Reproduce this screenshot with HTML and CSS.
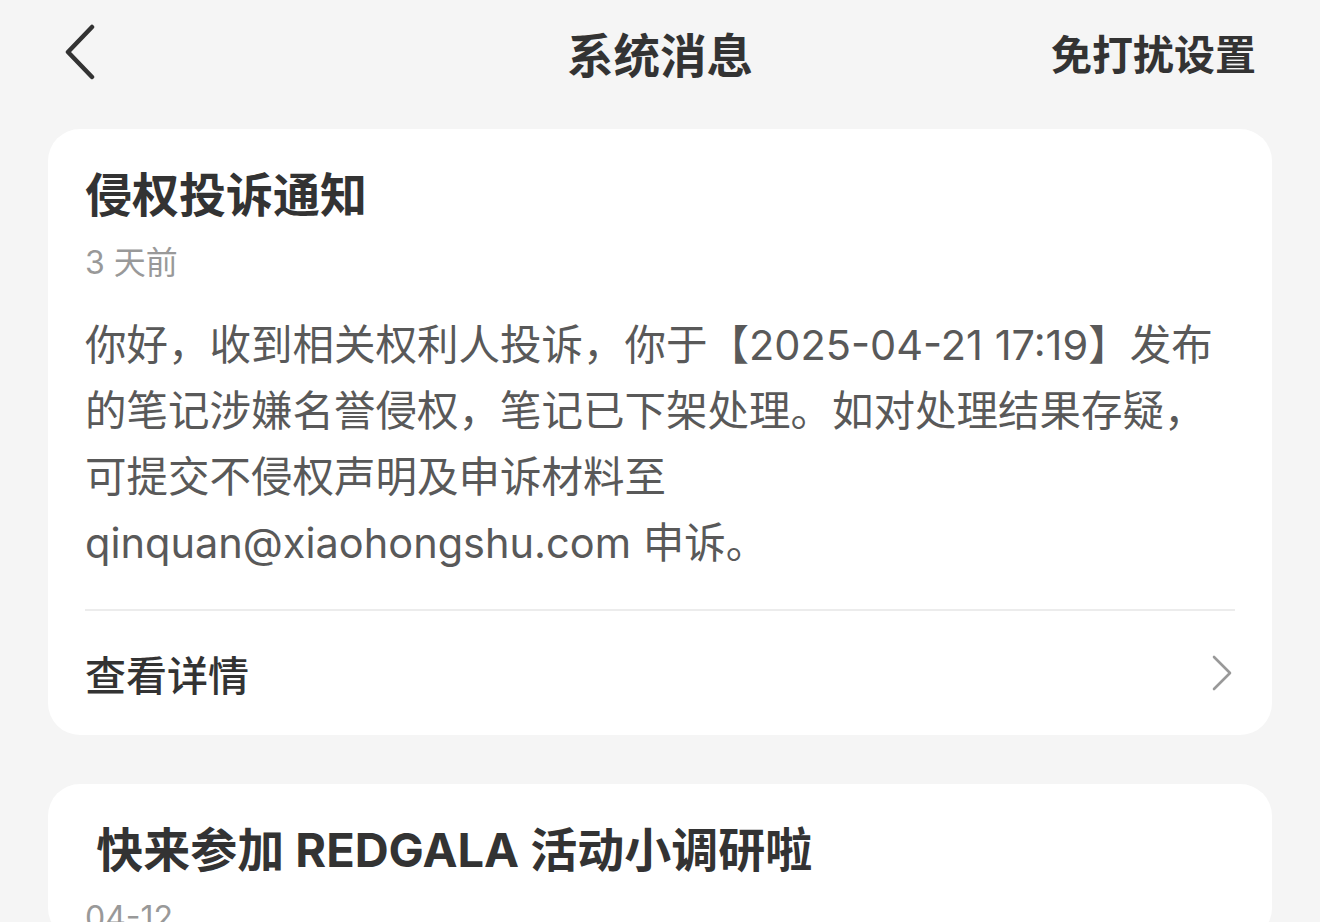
FILE: index.html
```html
<html>
<head>
  <meta charset="utf-8">
  <link rel="stylesheet" href="styles.css">
</head>
<body>
  <div class="nav">
    <div class="nav-back">
      <svg width="34" height="56" viewBox="0 0 34 56">
        <path d="M28 3 L4 28 L28 53" fill="none" stroke="#333" stroke-width="4.5" stroke-linecap="round" stroke-linejoin="round"/>
      </svg>
    </div>
    <div class="nav-title">系统消息</div>
    <div class="nav-action">免打扰设置</div>
  </div>

  <div class="card">
    <div class="card-title">侵权投诉通知</div>
    <div class="card-time">3 天前</div>
    <div class="card-text">你好，收到相关权利人投诉，你于【2025-04-21 17:19】发布的笔记涉嫌名誉侵权，笔记已下架处理。如对处理结果存疑，可提交不侵权声明及申诉材料至 <span class="nowrap">qinquan@xiaohongshu.com 申诉。</span></div>
    <div class="card-link">
      <span>查看详情</span>
      <svg width="22" height="36" viewBox="0 0 22 36">
        <path d="M3 2 L19 18 L3 34" fill="none" stroke="#999" stroke-width="2.6" stroke-linecap="round" stroke-linejoin="round"/>
      </svg>
    </div>
  </div>

  <div class="card">
    <div class="card-title">&nbsp;快来参加 REDGALA 活动小调研啦</div>
    <div class="card-time">04-12</div>
  </div>
</body>
</html>
```

FILE: styles.css
```css
body {
  margin: 0;
  padding: 0;
  background: #f5f5f5;
  font-family: "Inter", "Noto Sans CJK SC", sans-serif;
  color: #333;
}

.nav {
  display: flex;
  align-items: center;
  justify-content: space-between;
  height: 104px;
  padding: 0 64px;
}

.nav-back {
  width: 206px;
  display: flex;
  align-items: center;
}

.nav-back svg {
  display: block;
}

.nav-title {
  font-size: 46.5px;
  font-weight: 700;
  color: #333;
}

.nav-action {
  width: 206px;
  text-align: right;
  font-size: 41px;
  font-weight: 700;
  color: #333;
  white-space: nowrap;
}

.card {
  background: #fff;
  border-radius: 32px;
  margin: 25px 48px 49px;
  padding: 36px 37px 0;
}

.card-title {
  font-size: 47px;
  font-weight: 700;
  line-height: 60px;
  color: #333;
}

.card-time {
  margin-top: 16px;
  font-size: 32px;
  line-height: 44px;
  color: #999;
}

.card-text {
  margin-top: 27px;
  font-size: 41.5px;
  line-height: 66px;
  color: #595959;
  padding-bottom: 33px;
  border-bottom: 2px solid #ececec;
}

.nowrap {
  white-space: nowrap;
}

.card-link {
  height: 124px;
  display: flex;
  align-items: center;
  justify-content: space-between;
  font-size: 41px;
  font-weight: 500;
  color: #333;
}

.card-link svg {
  margin-right: 2px;
}
```
